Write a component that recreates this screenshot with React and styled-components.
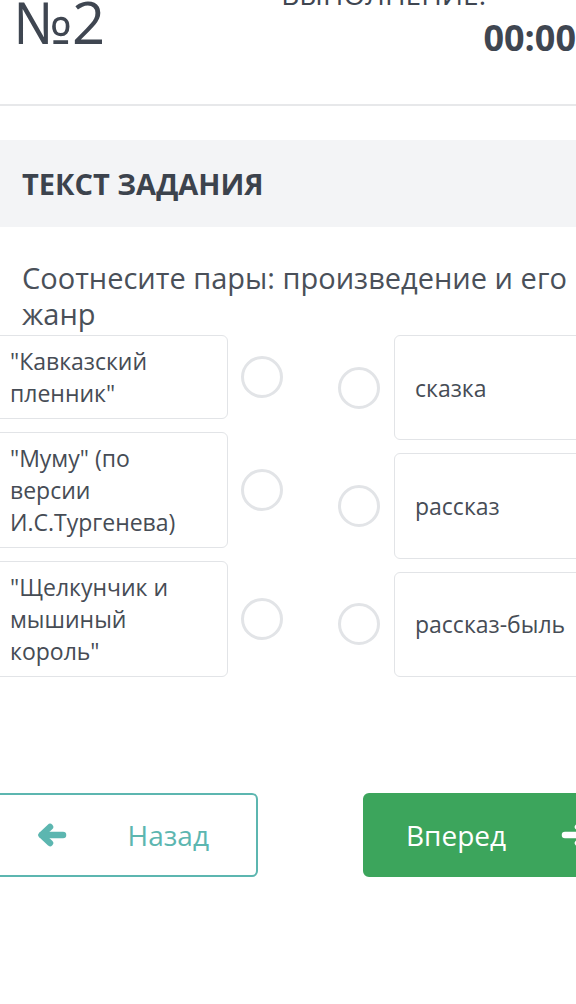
import React from 'react'
import styled, {createGlobalStyle} from 'styled-components'

const GlobalStyle = createGlobalStyle`
  html, body {
    margin: 0;
    padding: 0;
    background: #ffffff;
  }
  body {
    font-family: "Open Sans", "Noto Sans", sans-serif;
    color: #3e4550;
  }
`

const Viewport = styled.div`
  width: 576px;
  height: 1004px;
  overflow: hidden;
  background: #ffffff;
`

const Header = styled.header`
  display: flex;
  justify-content: space-between;
  align-items: flex-start;
  height: 132px;
  margin-top: -28px;
  padding-left: 13px;
  border-bottom: 2px solid #e7e8ea;
`

const TaskNumber = styled.div`
  font-size: 58px;
  line-height: 1;
  padding-top: 21px;
  color: #3f4651;
`

const Timer = styled.div`
  display: flex;
  flex-direction: column;
  align-items: flex-end;
  padding-top: 8px;
`

const TimerLabel = styled.div`
  font-size: 28px;
  line-height: 1;
  margin-right: 90px;
  color: #3f4651;
`

const TimerValue = styled.div`
  font-size: 36px;
  font-weight: 700;
  line-height: 1;
  margin-top: 12px;
  color: #3f4651;
`

const Band = styled.div`
  display: flex;
  align-items: center;
  height: 87px;
  margin-top: 34px;
  padding-left: 22px;
  background: #f3f4f6;
`

const BandTitle = styled.h2`
  margin: 0;
  font-size: 29px;
  font-weight: 700;
  color: #3c434d;
`

const Question = styled.p`
  margin: 33px 0 0;
  padding: 0 4px 0 22px;
  font-size: 29px;
  line-height: 36px;
  color: #4a5059;
`

const Matching = styled.div`
  display: flex;
  align-items: stretch;
  gap: 55px;
  margin: 3px 0 0 -6px;
`

const Column = styled.div`
  display: flex;
  flex-direction: column;
  gap: 13px;
`

const RightColumn = styled(Column)`
  flex: 1;
`

const Item = styled.div`
  display: flex;
  align-items: center;
  gap: ${(props) => props.$gap}px;
  flex: ${(props) => props.$grow ? 1 : 'none'};
`

const Card = styled.div`
  box-sizing: border-box;
  border: 1px solid #e2e4e7;
  border-radius: 6px;
  background: #ffffff;
  font-size: 23px;
  line-height: 32px;
  color: #464c55;
`

const LeftCard = styled(Card)`
  width: 234px;
  padding: 9px 18px 9px 15px;
`

const RightCard = styled(Card)`
  display: flex;
  align-items: center;
  align-self: stretch;
  width: 250px;
  padding: 0 20px;
`

const Radio = styled.span`
  box-sizing: border-box;
  flex: none;
  width: 42px;
  height: 42px;
  border: 3px solid #e2e4e7;
  border-radius: 50%;
`

const Nav = styled.div`
  display: flex;
  gap: 105px;
  margin: 116px 0 0 -5px;
`

const NavButton = styled.button`
  box-sizing: border-box;
  flex: none;
  display: flex;
  align-items: center;
  justify-content: space-between;
  width: ${(props) => props.$primary ? 278 : 263}px;
  height: 84px;
  padding: ${(props) => props.$primary ? '0 48px 0 41px' : '0 47px 0 40px'};
  border: 2px solid ${(props) => props.$primary ? '#3ca55c' : '#5cb6b0'};
  border-radius: 6px;
  background: ${(props) => props.$primary ? '#3ca55c' : '#ffffff'};
  color: ${(props) => props.$primary ? '#ffffff' : '#5cb6b0'};
  font-family: "Open Sans", "Noto Sans", sans-serif;
  font-size: 28px;
  cursor: pointer;
`

function Arrow({flip}) {
  return (
    <svg width="30" height="24" viewBox="0 0 30 24" style={flip ? {transform: 'scaleX(-1)'} : undefined}>
      <g fill="none" stroke="currentColor" strokeWidth="6.5" strokeLinecap="round" strokeLinejoin="round">
        <path d="M13 4 L4.5 12 L13 20" />
        <path d="M5 12 H26" />
      </g>
    </svg>
  )
}

const leftItems = [
  '"Кавказский пленник"',
  '"Муму" (по версии И.С.Тургенева)',
  '"Щелкунчик и мышиный король"',
]

const rightItems = ['сказка', 'рассказ', 'рассказ-быль']

export default function App() {
  return (
    <Viewport>
      <GlobalStyle />
      <Header>
        <TaskNumber>№2</TaskNumber>
        <Timer>
          <TimerLabel>ВЫПОЛНЕНИЕ:</TimerLabel>
          <TimerValue>00:00</TimerValue>
        </Timer>
      </Header>
      <Band>
        <BandTitle>ТЕКСТ ЗАДАНИЯ</BandTitle>
      </Band>
      <Question>Соотнесите пары: произведение и его жанр</Question>
      <Matching>
        <Column>
          {leftItems.map((text, idx) => (
            <Item key={idx} $gap={13}>
              <LeftCard>{text}</LeftCard>
              <Radio />
            </Item>
          ))}
        </Column>
        <RightColumn>
          {rightItems.map((text, idx) => (
            <Item key={idx} $gap={14} $grow>
              <Radio />
              <RightCard>{text}</RightCard>
            </Item>
          ))}
        </RightColumn>
      </Matching>
      <Nav>
        <NavButton>
          <Arrow />
          <span>Назад</span>
        </NavButton>
        <NavButton $primary>
          <span>Вперед</span>
          <Arrow flip />
        </NavButton>
      </Nav>
    </Viewport>
  )
}
